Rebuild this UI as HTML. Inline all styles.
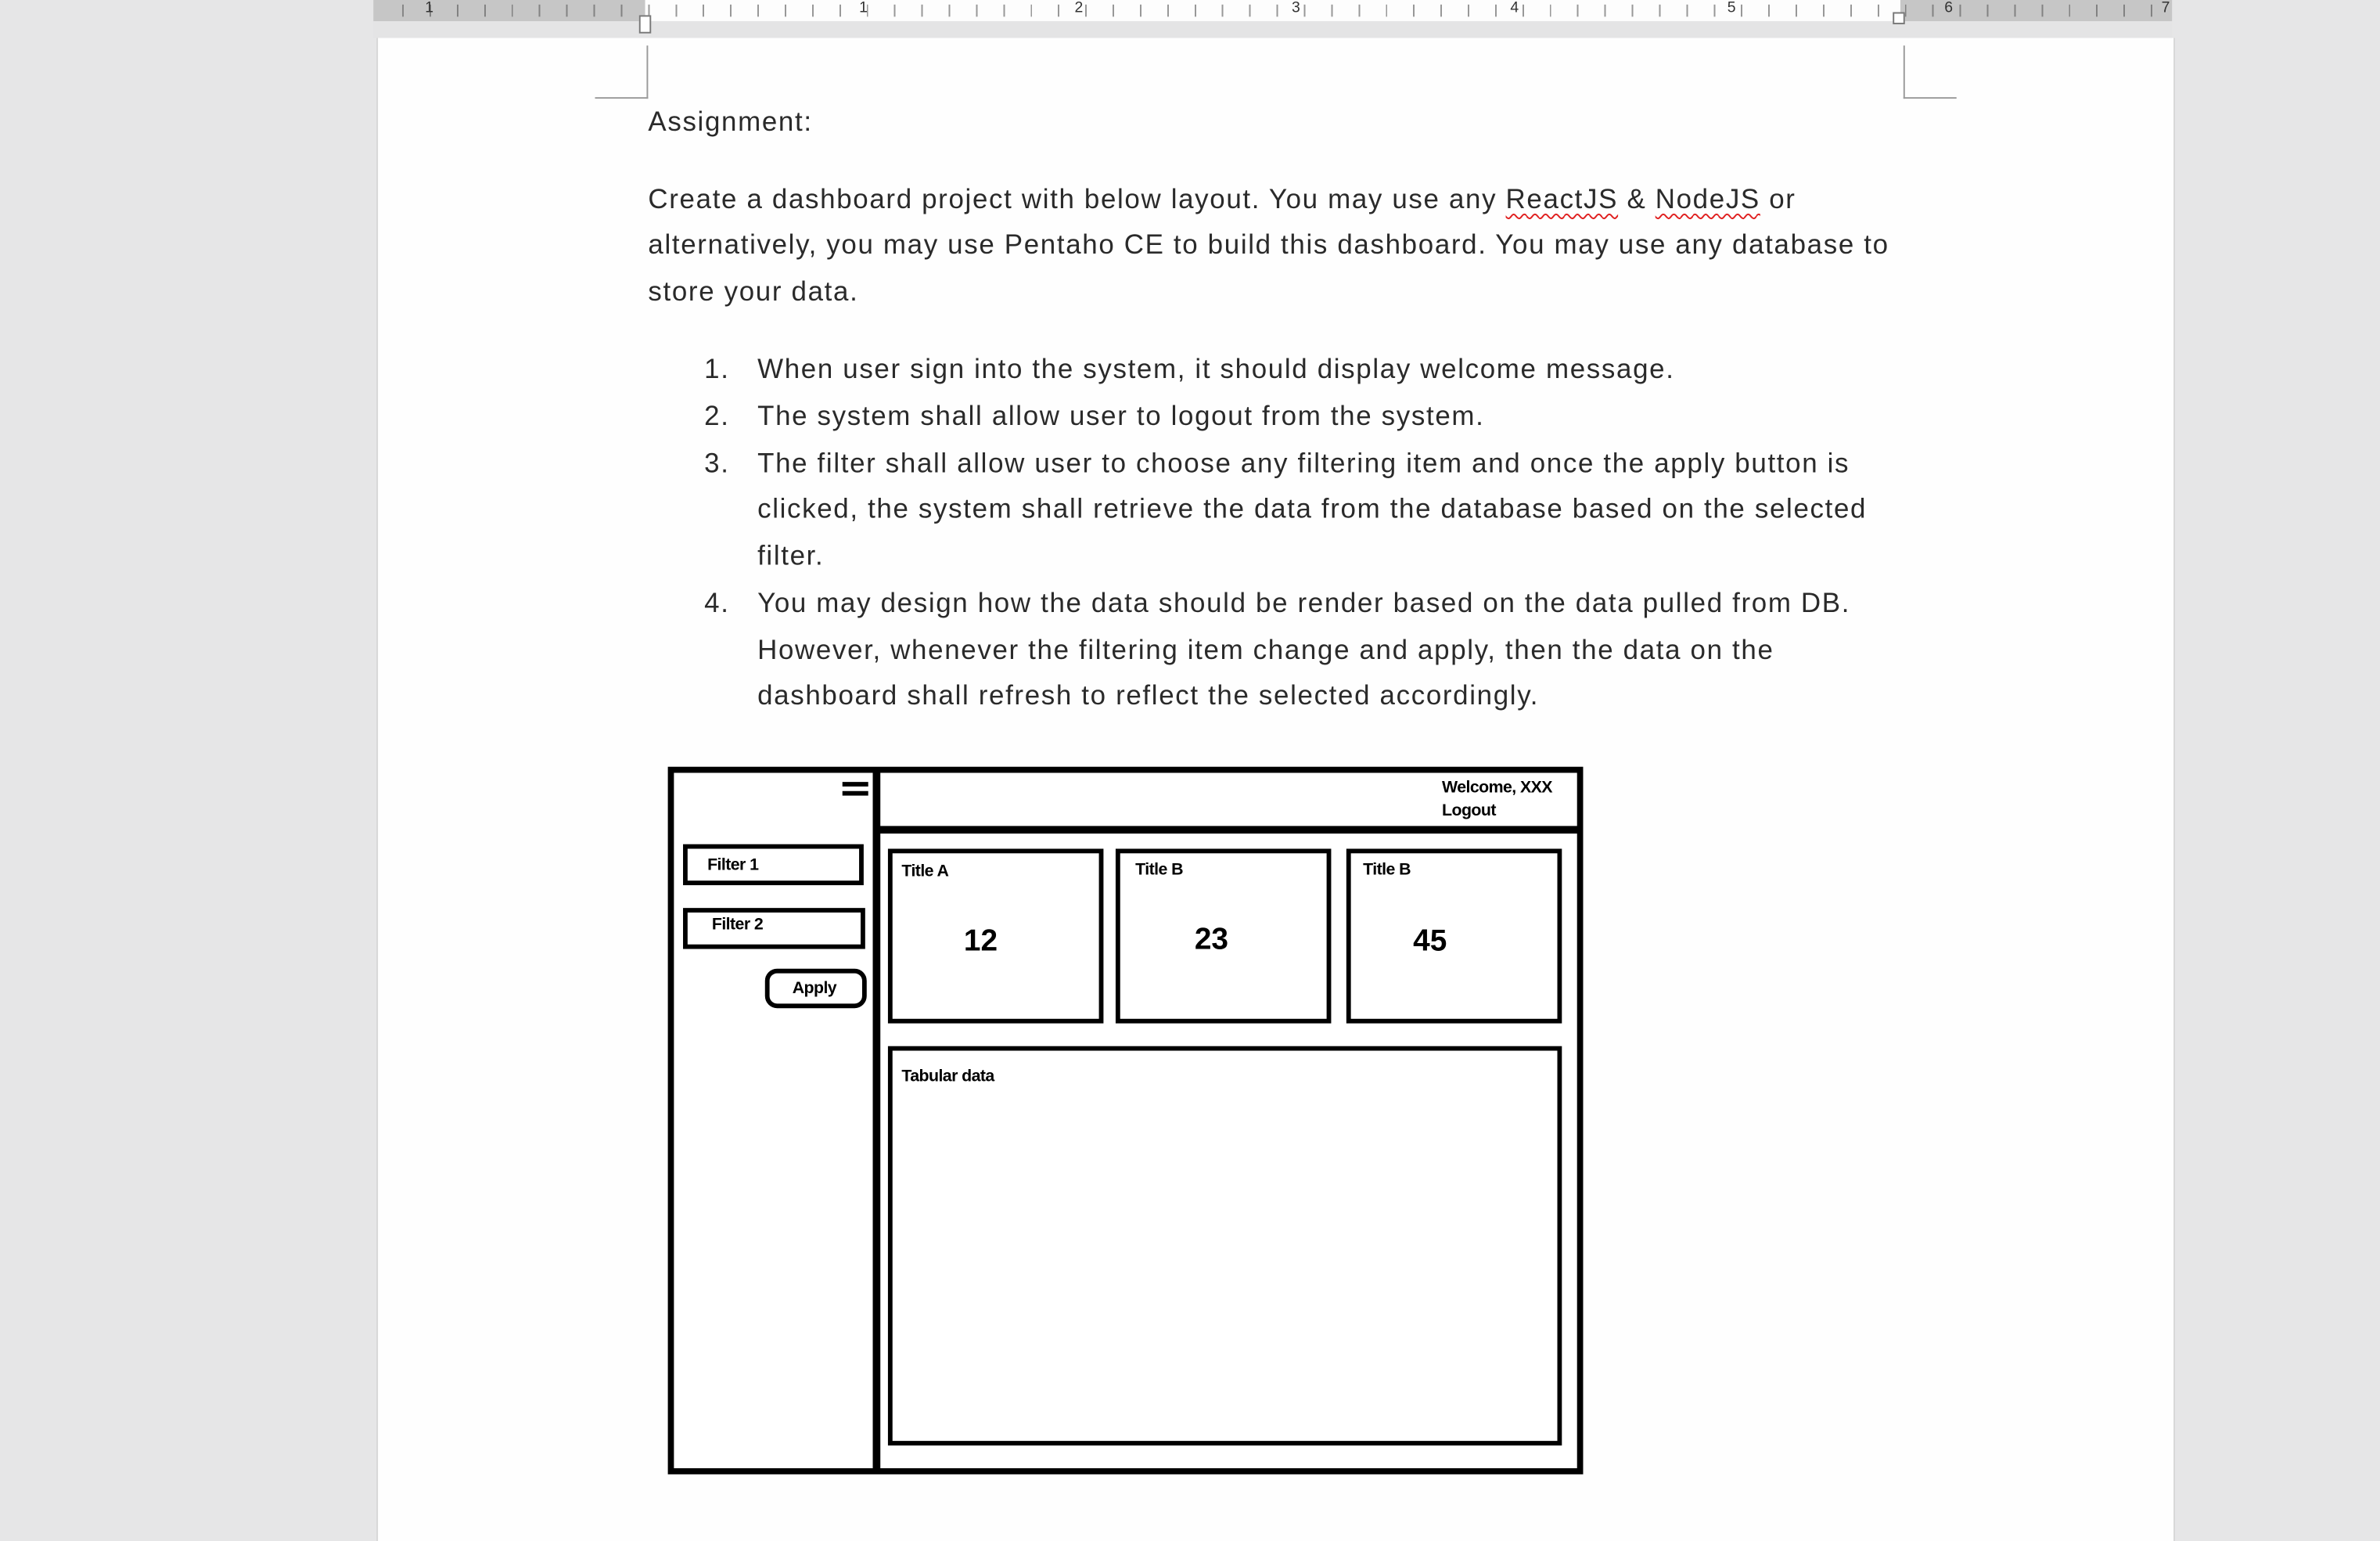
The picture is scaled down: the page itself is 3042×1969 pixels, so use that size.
<!DOCTYPE html>
<html><head><meta charset="utf-8"><style>
html,body{margin:0;padding:0;width:3042px;height:1944px;overflow:hidden;background:#e6e6e7;}
#w{position:absolute;left:0;top:0;width:1568px;height:1002px;transform:scale(1.94005);transform-origin:0 0;font-family:"Liberation Sans",sans-serif;}
.a{position:absolute;}
.t{position:absolute;white-space:nowrap;font-size:18px;color:#2a2a2a;line-height:20px;letter-spacing:0.85px;top:0;}
.sq{text-decoration:underline wavy #e02020;text-decoration-thickness:1px;text-underline-offset:3px;}
.b{position:absolute;border:3px solid #000;box-sizing:border-box;background:#fff;}
.d{position:absolute;font-weight:bold;font-size:11px;color:#000;white-space:nowrap;letter-spacing:-0.3px;margin-top:2px;}
.n{position:absolute;font-weight:bold;font-size:20px;color:#000;margin-top:2px;}
.tick{position:absolute;top:3px;height:8px;background:repeating-linear-gradient(90deg,#555 0 1px,transparent 1px 18px);}
</style></head><body><div id="w">
<!-- ruler -->
<div class="a" style="left:246px;top:0;width:1185px;height:14px;background:#c6c6c6"></div>
<div class="a" style="left:425px;top:0;width:827px;height:14px;background:#fdfdfd"></div>
<div class="tick" style="left:265px;width:1165px;opacity:.6"></div>
<div class="a" style="left:246px;top:14px;width:1185px;height:11px;background:#e4e4e5"></div>
<div class="a" style="left:280px;top:0;font-size:10px;color:#333">1</div>
<div class="a" style="left:566px;top:0;font-size:10px;color:#333">1</div>
<div class="a" style="left:708px;top:0;font-size:10px;color:#333">2</div>
<div class="a" style="left:851px;top:0;font-size:10px;color:#333">3</div>
<div class="a" style="left:995px;top:0;font-size:10px;color:#333">4</div>
<div class="a" style="left:1138px;top:0;font-size:10px;color:#333">5</div>
<div class="a" style="left:1281px;top:0;font-size:10px;color:#333">6</div>
<div class="a" style="left:1424px;top:0;font-size:10px;color:#333">7</div>
<div class="a" style="left:421px;top:10px;width:8px;height:12px;border:1px solid #777;background:#fff;box-sizing:border-box"></div>
<div class="a" style="left:1247px;top:8px;width:8px;height:8px;border:1px solid #777;background:#fff;box-sizing:border-box"></div>
<!-- page -->
<div class="a" style="left:248px;top:25px;width:1183px;height:990px;background:#fefefe;border-left:1px solid #d6d6d6;border-right:1px solid #d6d6d6"></div>
<div class="a" style="left:426px;top:30px;width:1px;height:35px;background:#9a9a9a"></div>
<div class="a" style="left:392px;top:64px;width:35px;height:1px;background:#9a9a9a"></div>
<div class="a" style="left:1254px;top:30px;width:1px;height:35px;background:#9a9a9a"></div>
<div class="a" style="left:1254px;top:64px;width:35px;height:1px;background:#9a9a9a"></div>
<!-- text -->
<div class="t" style="left:427px;top:70px">Assignment:</div>
<div class="t" style="left:427px;top:121px">Create a dashboard project with below layout. You may use any <span class="sq">ReactJS</span> &amp; <span class="sq">NodeJS</span> or</div>
<div class="t" style="left:427px;top:151px">alternatively, you may use Pentaho CE to build this dashboard. You may use any database to</div>
<div class="t" style="left:427px;top:182px">store your data.</div>
<div class="t" style="left:464px;top:233px">1.</div><div class="t" style="left:499px;top:233px">When user sign into the system, it should display welcome message.</div>
<div class="t" style="left:464px;top:264px">2.</div><div class="t" style="left:499px;top:264px">The system shall allow user to logout from the system.</div>
<div class="t" style="left:464px;top:295px">3.</div><div class="t" style="left:499px;top:295px">The filter shall allow user to choose any filtering item and once the apply button is</div>
<div class="t" style="left:499px;top:325px">clicked, the system shall retrieve the data from the database based on the selected</div>
<div class="t" style="left:499px;top:356px">filter.</div>
<div class="t" style="left:464px;top:387px">4.</div><div class="t" style="left:499px;top:387px">You may design how the data should be render based on the data pulled from DB.</div>
<div class="t" style="left:499px;top:418px">However, whenever the filtering item change and apply, then the data on the</div>
<div class="t" style="left:499px;top:448px">dashboard shall refresh to reflect the selected accordingly.</div>
<!-- drawing -->
<div class="a" style="left:440px;top:505px;width:603px;height:466px;border:4px solid #000;box-sizing:border-box;background:#fff"></div>
<div class="a" style="left:575px;top:507px;width:5px;height:462px;background:#000"></div>
<div class="a" style="left:577px;top:544px;width:464px;height:5px;background:#000"></div>
<div class="a" style="left:555px;top:515px;width:17px;height:3px;background:#000"></div>
<div class="a" style="left:555px;top:521px;width:17px;height:3px;background:#000"></div>
<div class="d" style="left:950px;top:511px">Welcome, XXX</div>
<div class="d" style="left:950px;top:526px">Logout</div>
<div class="b" style="left:450px;top:556px;width:119px;height:27px"></div>
<div class="d" style="left:466px;top:562px">Filter 1</div>
<div class="b" style="left:450px;top:598px;width:120px;height:27px"></div>
<div class="d" style="left:469px;top:601px">Filter 2</div>
<div class="b" style="left:504px;top:638px;width:67px;height:26px;border-radius:8px"></div>
<div class="d" style="left:522px;top:643px">Apply</div>
<div class="b" style="left:585px;top:559px;width:142px;height:115px"></div>
<div class="d" style="left:594px;top:566px">Title A</div><div class="n" style="left:635px;top:607px">12</div>
<div class="b" style="left:735px;top:559px;width:142px;height:115px"></div>
<div class="d" style="left:748px;top:565px">Title B</div><div class="n" style="left:787px;top:606px">23</div>
<div class="b" style="left:887px;top:559px;width:142px;height:115px"></div>
<div class="d" style="left:898px;top:565px">Title B</div><div class="n" style="left:931px;top:607px">45</div>
<div class="b" style="left:585px;top:689px;width:444px;height:263px"></div>
<div class="d" style="left:594px;top:701px">Tabular data</div>
</div></body></html>
